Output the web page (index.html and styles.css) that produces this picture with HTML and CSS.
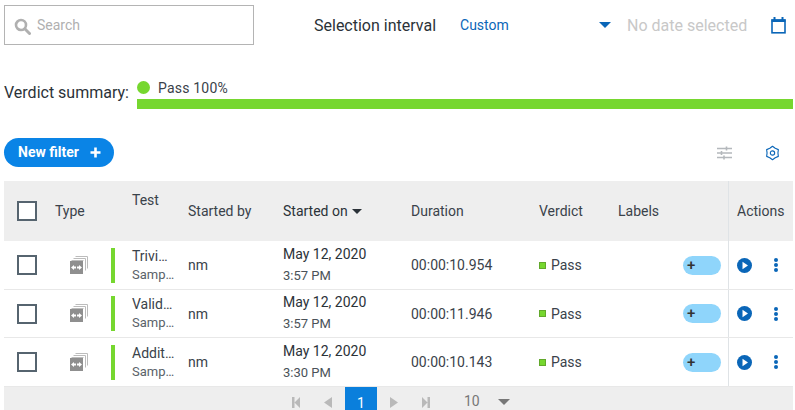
FILE: index.html
```html
<!DOCTYPE html>
<html lang="en">
<head>
<meta charset="utf-8">
<title>Test results</title>
<link rel="stylesheet" href="styles.css">
</head>
<body>
<div class="top">
  <div class="search">
    <svg class="search-icon" width="17" height="17" viewBox="0 0 17 17"><circle cx="7" cy="7" r="5" fill="none" stroke="#b0b0b0" stroke-width="2.6"/><path d="M10.8 10.8L15.5 15.5" stroke="#b0b0b0" stroke-width="3" stroke-linecap="round"/></svg>
    <span>Search</span>
  </div>
  <span class="interval-label">Selection interval</span>
  <div class="interval-select"><span>Custom</span><i class="caret"></i></div>
  <span class="no-date">No date selected</span>
  <svg class="calendar" width="15" height="17" viewBox="0 0 15 17"><path d="M3.500 0v3M11.500 0v3" stroke="#0a66b8" stroke-width="2"/><rect x="1" y="3" width="13" height="12.800" fill="none" stroke="#0a66b8" stroke-width="1.600"/><rect x="0.500" y="2.500" width="14" height="2.500" fill="#0a66b8"/></svg>
</div>

<div class="summary">
  <span class="summary-label">Verdict summary:</span>
  <div class="summary-chart">
    <div class="legend"><i class="dot"></i><span class="legend-text">Pass 100%</span></div>
    <div class="bar"></div>
  </div>
</div>

<div class="toolbar">
  <button class="new-filter"><span>New filter</span><svg width="11" height="11" viewBox="0 0 11 11"><path d="M5.500 .5v10M.5 5.500h10" stroke="#fff" stroke-width="2.600"/></svg></button>
  <div class="tools">
    <svg width="15" height="14" viewBox="0 0 15 14"><path d="M0 2.500h15M0 7h15M0 11.500h15" stroke="#b4b8bc" stroke-width="1.300"/><path d="M9.500 .5v4M4.500 5v4M7 9.500v4" stroke="#b4b8bc" stroke-width="1.600"/></svg>
    <svg width="15" height="16" viewBox="0 0 16 16"><path d="M8 .8L10.900 2.980 14.240 4.400 13.800 8 14.240 11.600 10.900 13.020 8 15.200 5.100 13.020 1.760 11.600 2.200 8 1.760 4.400 5.100 2.980Z" fill="none" stroke="#0a66b8" stroke-width="1.200" stroke-linejoin="round"/><circle cx="8" cy="8" r="2.300" fill="none" stroke="#0a66b8" stroke-width="1.200"/></svg>
  </div>
</div>

<div class="table">
  <div class="row head">
    <div class="cell"><i class="check"></i></div>
    <div class="cell span2">Type</div>
    <div class="cell test-head">Test</div>
    <div class="cell">Started by</div>
    <div class="cell sorted">Started on<i class="sort"></i></div>
    <div class="cell">Duration</div>
    <div class="cell">Verdict</div>
    <div class="cell">Labels</div>
    <div class="cell actions">Actions</div>
  </div>

  <div class="row body-row">
    <div class="cell"><i class="check"></i></div>
    <div class="cell type-cell"><svg class="type-icon" width="18" height="18" viewBox="0 0 18 18"><path d="M5.500 .5h12v12M3.500 2.500h12v12M1.500 4.500h12" fill="none" stroke="#bcbcbc" stroke-width="1"/><rect x="0" y="5" width="13" height="13" fill="#8f8f8f"/><path d="M1 11.500l3-2.600v1.600h5V8.900l3 2.600-3 2.600v-1.600H4v1.600z" fill="#fff"/><path d="M6 9.500h1v4H6z" fill="#8f8f8f"/></svg></div>
    <div class="cell"><i class="status-bar"></i></div>
    <div class="cell name"><span>Trivi…</span><small>Samp…</small></div>
    <div class="cell">nm</div>
    <div class="cell date"><span>May 12, 2020</span><small>3:57 PM</small></div>
    <div class="cell">00:00:10.954</div>
    <div class="cell verdict"><i class="square"></i>Pass</div>
    <div class="cell label-cell"><span class="add-label">+</span></div>
    <div class="cell actions act"><svg width="15" height="15" viewBox="0 0 15 15"><circle cx="7.500" cy="7.500" r="7.500" fill="#0a66b8"/><path d="M5.500 3.800l5.500 3.700-5.500 3.700z" fill="#fff"/></svg><i class="kebab"></i></div>
  </div>

  <div class="row body-row">
    <div class="cell"><i class="check"></i></div>
    <div class="cell type-cell"><svg class="type-icon" width="18" height="18" viewBox="0 0 18 18"><path d="M5.500 .5h12v12M3.500 2.500h12v12M1.500 4.500h12" fill="none" stroke="#bcbcbc" stroke-width="1"/><rect x="0" y="5" width="13" height="13" fill="#8f8f8f"/><path d="M1 11.500l3-2.600v1.600h5V8.900l3 2.600-3 2.600v-1.600H4v1.600z" fill="#fff"/><path d="M6 9.500h1v4H6z" fill="#8f8f8f"/></svg></div>
    <div class="cell"><i class="status-bar"></i></div>
    <div class="cell name"><span>Valid…</span><small>Samp…</small></div>
    <div class="cell">nm</div>
    <div class="cell date"><span>May 12, 2020</span><small>3:57 PM</small></div>
    <div class="cell">00:00:11.946</div>
    <div class="cell verdict"><i class="square"></i>Pass</div>
    <div class="cell label-cell"><span class="add-label">+</span></div>
    <div class="cell actions act"><svg width="15" height="15" viewBox="0 0 15 15"><circle cx="7.500" cy="7.500" r="7.500" fill="#0a66b8"/><path d="M5.500 3.800l5.500 3.700-5.500 3.700z" fill="#fff"/></svg><i class="kebab"></i></div>
  </div>

  <div class="row body-row">
    <div class="cell"><i class="check"></i></div>
    <div class="cell type-cell"><svg class="type-icon" width="18" height="18" viewBox="0 0 18 18"><path d="M5.500 .5h12v12M3.500 2.500h12v12M1.500 4.500h12" fill="none" stroke="#bcbcbc" stroke-width="1"/><rect x="0" y="5" width="13" height="13" fill="#8f8f8f"/><path d="M1 11.500l3-2.600v1.600h5V8.900l3 2.600-3 2.600v-1.600H4v1.600z" fill="#fff"/><path d="M6 9.500h1v4H6z" fill="#8f8f8f"/></svg></div>
    <div class="cell"><i class="status-bar"></i></div>
    <div class="cell name"><span>Addit…</span><small>Samp…</small></div>
    <div class="cell">nm</div>
    <div class="cell date"><span>May 12, 2020</span><small>3:30 PM</small></div>
    <div class="cell">00:00:10.143</div>
    <div class="cell verdict"><i class="square"></i>Pass</div>
    <div class="cell label-cell"><span class="add-label">+</span></div>
    <div class="cell actions act"><svg width="15" height="15" viewBox="0 0 15 15"><circle cx="7.500" cy="7.500" r="7.500" fill="#0a66b8"/><path d="M5.500 3.800l5.500 3.700-5.500 3.700z" fill="#fff"/></svg><i class="kebab"></i></div>
  </div>

  <div class="pager">
    <svg width="8" height="11" viewBox="0 0 8 11"><path d="M0 0h2.500v11H0zM8 0v11L2.500 5.500z" fill="#b9b9b9"/></svg>
    <svg class="prev" width="8" height="11" viewBox="0 0 8 11"><path d="M8 0v11L0 5.500z" fill="#b9b9b9"/></svg>
    <span class="page">1</span>
    <svg class="next" width="8" height="11" viewBox="0 0 8 11"><path d="M0 0v11l8-5.500z" fill="#b9b9b9"/></svg>
    <svg class="last" width="8" height="11" viewBox="0 0 8 11"><path d="M0 0v11l5.500-5.500zM5.500 0H8v11H5.500z" fill="#b9b9b9"/></svg>
    <span class="size">10</span>
    <i class="size-caret"></i>
  </div>
</div>
</body>
</html>
```

FILE: styles.css
```css
* { box-sizing: border-box; }
html, body { margin: 0; padding: 0; }
body {
  width: 795px;
  height: 410px;
  overflow: hidden;
  background: #fff;
  font-family: Roboto, sans-serif;
  color: #3a424a;
  font-size: 14px;
}
i { display: block; }

.top {
  display: flex;
  align-items: center;
  height: 40px;
  margin: 5px 0 0 4px;
}
.search {
  display: flex;
  align-items: center;
  width: 250px;
  height: 40px;
  border: 1px solid #b4b4b4;
  padding-left: 9px;
  color: #b0b0b0;
  font-size: 14px;
}
.search-icon { margin-right: 6px; margin-top: 2px; }
.interval-label { margin-left: 60px; font-size: 16px; color: #2b3238; }
.interval-select {
  display: flex;
  align-items: center;
  width: 151px;
  margin-left: 24px;
  color: #0a66b8;
  font-size: 14px;
}
.caret {
  margin-left: auto;
  border-left: 6px solid transparent;
  border-right: 6px solid transparent;
  border-top: 6px solid #0a66b8;
}
.no-date { margin-left: 16px; font-size: 16px; color: #c8c8c8; }
.calendar { margin-left: 24px; }

.summary {
  display: flex;
  align-items: flex-end;
  margin: 36px 2px 0 4px;
}
.summary-label { font-size: 16px; color: #2b3238; margin-bottom: 7px; line-height: 19px; width: 133px; }
.summary-chart { flex: 1; }
.legend {
  display: flex;
  align-items: center;
  height: 18px;
  padding-bottom: 5px;
  font-size: 14px;
  line-height: 15px;
  color: #3a424a;
  letter-spacing: .2px;
}
.legend-text { padding-top: 1px; }
.dot { width: 13px; height: 13px; border-radius: 50%; background: #76d72f; margin-right: 8px; }
.bar { height: 10px; background: #76d72f; }

.toolbar {
  display: flex;
  align-items: center;
  justify-content: space-between;
  margin: 29px 15px 0 4px;
}
.new-filter {
  display: flex;
  align-items: center;
  gap: 11px;
  width: 110px;
  height: 29px;
  border: 0;
  border-radius: 15px;
  background: #0a84e6;
  color: #fff;
  font: 700 14px Roboto, sans-serif;
  padding: 0 0 1px 14px;
}
.tools { display: flex; align-items: center; gap: 33px; margin-top: 1px; }

.table { margin: 14px 2px 0 4px; }
.row {
  display: grid;
  grid-template-columns: 51px 56px 21px 56px 95px 128px 128px 79px 110px 65px;
  align-items: stretch;
}
.cell { display: flex; align-items: center; min-width: 0; }
.head {
  height: 60px;
  background: #eee;
  color: #3a424a;
}
.span2 { grid-column: span 2; }
.test-head { padding-bottom: 22px; }
.sorted { color: #2b3238; }
.sort {
  margin-left: 4px;
  border-left: 5px solid transparent;
  border-right: 5px solid transparent;
  border-top: 5px solid #2b3238;
}
.check {
  width: 20px;
  height: 20px;
  margin-left: 13px;
  border: 2px solid #56646f;
  background: #fff;
}
.actions { border-left: 1px solid #dfe3e6; padding-left: 8px; }
.body-row { height: 49px; border-bottom: 1px solid #e8e8e8; }
.body-row:nth-of-type(3) { height: 48px; }
.type-cell { padding-left: 15px; padding-bottom: 1px; }
.status-bar { width: 4px; height: 35px; background: #76d72f; }
.name, .date { flex-direction: column; align-items: flex-start; justify-content: center; }
.name span { line-height: 18px; }
.name small { font-size: 13px; line-height: 19px; color: #5a6269; }
.date span { line-height: 21px; color: #2b3238; }
.date small { font-size: 13px; line-height: 22px; color: #4a5259; }
.verdict { gap: 5px; }
.square { width: 7px; height: 7px; background: #76d72f; border: 1px solid #62a82c; }
.label-cell { justify-content: flex-end; padding-right: 7px; }
.add-label {
  width: 38px;
  height: 19px;
  border-radius: 10px;
  background: #8fd5fb;
  color: #333;
  font-size: 15px;
  font-weight: 500;
  line-height: 19px;
  padding-left: 4px;
}
.act { gap: 22px; }
.kebab {
  width: 4px;
  height: 4px;
  border-radius: 50%;
  background: #0a66b8;
  box-shadow: 0 -5px 0 #0a66b8, 0 5px 0 #0a66b8;
}
.pager {
  display: flex;
  align-items: flex-end;
  height: 23px;
  padding: 0 0 2px 288px;
  background: #eee;
  color: #777;
}
.prev { margin-left: 24px; }
.page {
  width: 32px;
  height: 23px;
  margin: 0 0 -2px 13px;
  background: #0a7fdc;
  color: #fff;
  text-align: center;
  line-height: 33px;
  overflow: hidden;
}
.next { margin-left: 13px; }
.last { margin-left: 24px; }
.size { margin-left: 34px; line-height: 13px; }
.size-caret {
  margin: 0 0 3px 18px;
  border-left: 6px solid transparent;
  border-right: 6px solid transparent;
  border-top: 6px solid #777;
}
```
